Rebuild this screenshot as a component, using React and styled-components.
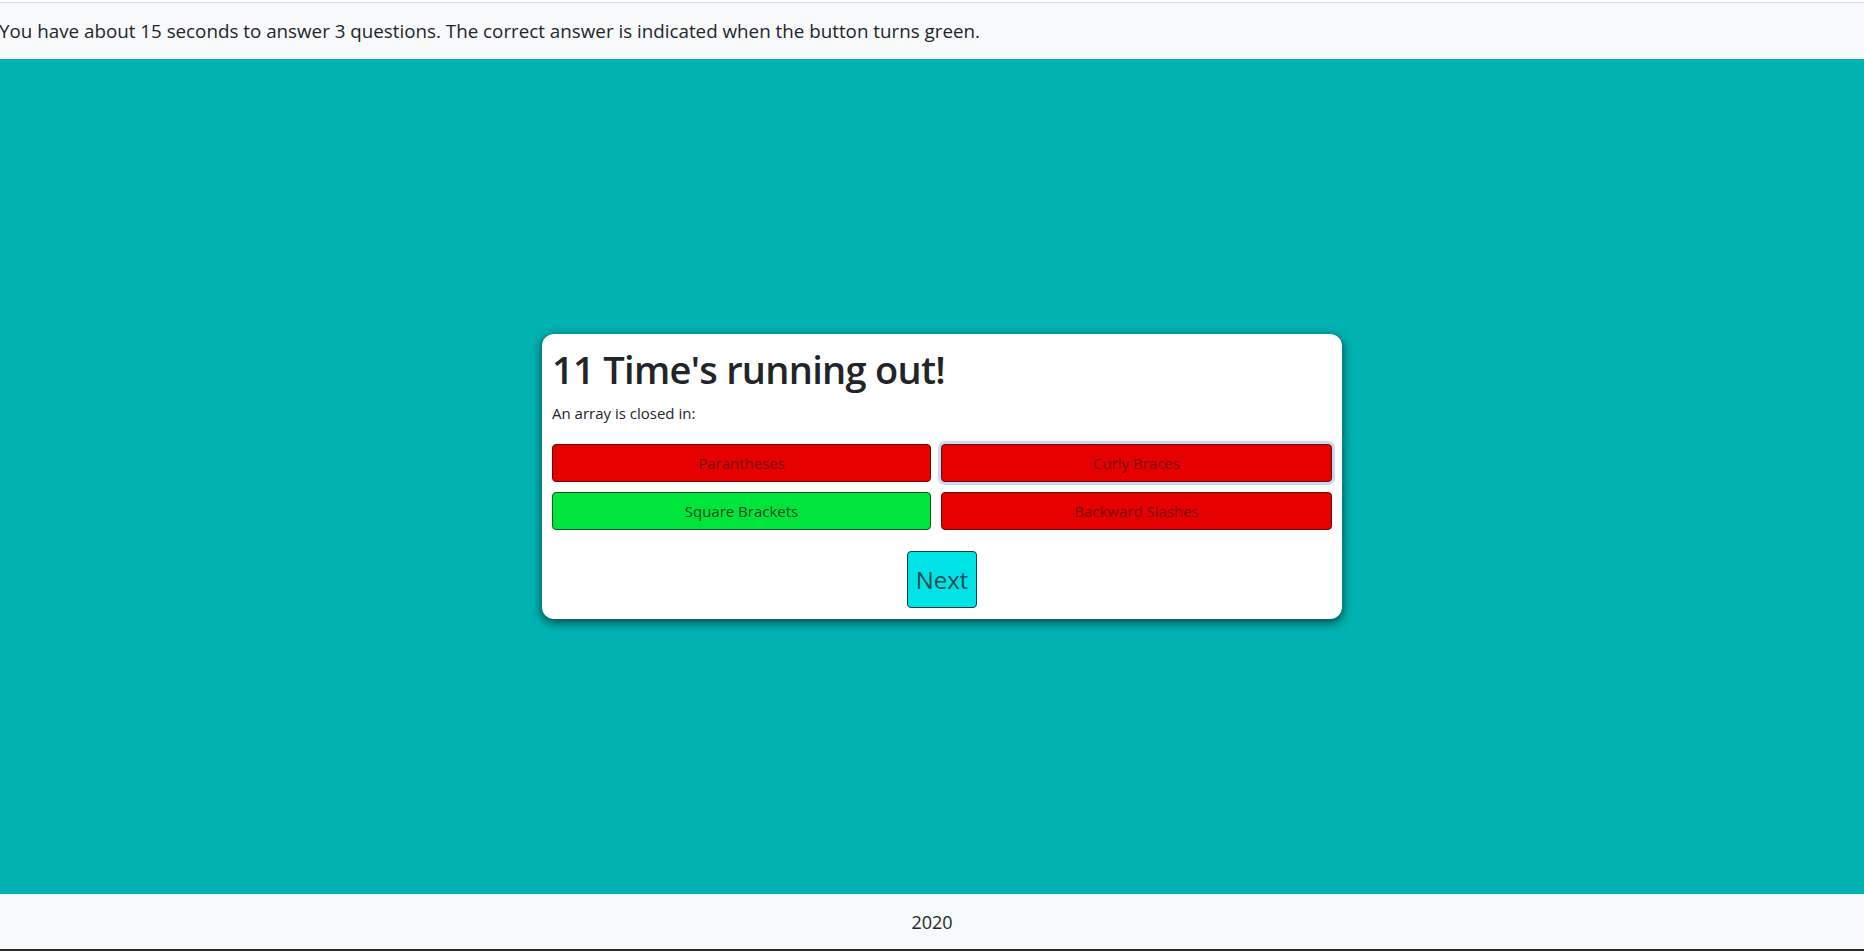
import React from 'react';
import styled, { createGlobalStyle } from 'styled-components';

const GlobalStyle = createGlobalStyle`
    html, body {
        margin: 0;
        padding: 0;
        background: #ffffff;
    }
    body {
        font-family: "Open Sans", "Noto Sans", sans-serif;
        color: #212529;
    }
`;

const Page = styled.div`
    display: flex;
    flex-direction: column;
    height: 951px;
    padding-top: 2px;
    box-sizing: border-box;
`;

const Header = styled.header`
    flex: 0 0 auto;
    height: 57px;
    display: flex;
    align-items: center;
    background-color: #f8f9fa;
    border-top: 1px solid #dcdfe3;
    box-sizing: border-box;
`;

const Intro = styled.p`
    margin: 0 0 0 -1px;
    font-size: 18.8px;
    line-height: 1.5;
`;

const Main = styled.main`
    flex: 1 1 auto;
    display: flex;
    align-items: center;
    justify-content: center;
    padding-left: 20px;
    background-color: #00b2b2;
`;

const Card = styled.section`
    width: 800px;
    box-sizing: border-box;
    padding: 12px 10px 11px;
    background: #ffffff;
    border-radius: 12px;
    box-shadow: 0 3px 10px 1px rgba(0, 0, 0, 0.55);
`;

const Title = styled.h1`
    margin: 0 0 8px;
    font-size: 38px;
    font-weight: 600;
    letter-spacing: -0.7px;
    line-height: 1.25;
`;

const Question = styled.p`
    margin: 0 0 20px;
    font-size: 15px;
    line-height: 1.5;
`;

const Answers = styled.div`
    display: grid;
    grid-template-columns: 379fr 391fr;
    gap: 10px;
`;

const Answer = styled.button`
    height: 38px;
    border: 1px solid ${(p) => (p.$correct ? '#0b5a1f' : '#6a0a0a')};
    border-radius: 4px;
    background-color: ${(p) => (p.$correct ? '#00e53c' : '#e60000')};
    color: ${(p) => (p.$correct ? '#0c4a1a' : '#7a0a0a')};
    font-family: inherit;
    font-size: 15px;
    box-shadow: ${(p) => (p.$focused ? '0 0 0 3px #c9d9f2' : 'none')};
    cursor: pointer;
`;

const Footer = styled.div`
    display: flex;
    justify-content: center;
    margin-top: 21px;
`;

const NextButton = styled.button`
    height: 57px;
    padding: 0 8px;
    border: 1px solid #1b3c40;
    border-radius: 4px;
    background-color: #00e3e6;
    color: #1d4d55;
    font-family: inherit;
    font-size: 24px;
    cursor: pointer;
`;

const PageFooter = styled.footer`
    flex: 0 0 auto;
    height: 55px;
    display: flex;
    align-items: center;
    justify-content: center;
    background-color: #f8f9fa;
    font-size: 18px;
    border-bottom: 2px solid #2b2a28;
`;

const answers = [
    { label: 'Parantheses' },
    { label: 'Curly Braces', focused: true },
    { label: 'Square Brackets', correct: true },
    { label: 'Backward Slashes' },
];

export default function App() {
    return (
        <Page>
            <GlobalStyle />
            <Header>
                <Intro>
                    You have about 15 seconds to answer 3 questions. The correct answer is indicated when the button turns green.
                </Intro>
            </Header>
            <Main>
                <Card>
                    <Title>11 Time's running out!</Title>
                    <Question>An array is closed in:</Question>
                    <Answers>
                        {answers.map((a) => (
                            <Answer key={a.label} $correct={a.correct} $focused={a.focused}>
                                {a.label}
                            </Answer>
                        ))}
                    </Answers>
                    <Footer>
                        <NextButton>Next</NextButton>
                    </Footer>
                </Card>
            </Main>
            <PageFooter>2020</PageFooter>
        </Page>
    );
}
